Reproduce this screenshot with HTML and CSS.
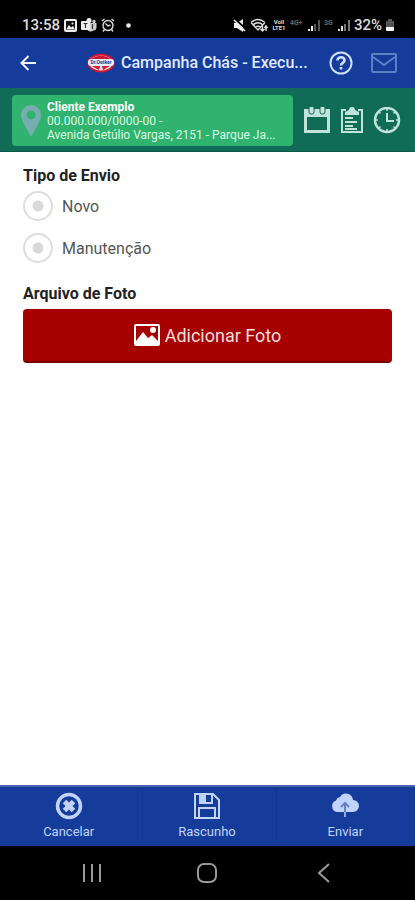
FILE: index.html
```html
<!DOCTYPE html>
<html lang="pt-BR">
<head>
<meta charset="utf-8">
<meta name="viewport" content="width=device-width, initial-scale=1">
<title>Campanha Chás</title>
<link rel="stylesheet" href="styles.css">
</head>
<body>
<div class="status">
  <div class="status-group status-left">
    <span class="status-text">13:58</span>
    <svg width="13" height="13" viewBox="0 0 13 13"><rect width="13" height="13" rx="2" fill="#eee"/><rect x="2" y="2" width="9" height="9" fill="#111"/><path d="M2 10.500 5 6l2 2.500L9 7l2 3.500z" fill="#eee"/><circle cx="8.500" cy="4.500" r="1" fill="#eee"/></svg>
    <svg width="16" height="14" viewBox="0 0 16 14"><circle cx="8" cy="2.500" r="2.500" fill="#eee"/><circle cx="13" cy="3.500" r="1.700" fill="#ccc"/><path d="M6 5h9.500v5a3 3 0 0 1-3 2.500A4 4 0 0 1 6 11z" fill="#ccc"/><rect y="3" width="9" height="9" rx="1" fill="#eee"/><path d="M2.500 5.500h4M4.500 5.500V10M11.500 6v5" stroke="#333" stroke-width="1.200"/></svg>
    <svg width="14" height="14" viewBox="0 0 14 14" fill="none" stroke="#ddd" stroke-width="1.400"><circle cx="7" cy="7.500" r="5"/><path d="M1 3 3.500 1M13 3 10.500 1M3.500 11.500 2 13.500M10.500 11.500 12 13.500M4.500 5.500 7 8l2.500-1"/></svg>
    <svg class="dot" width="5" height="5" viewBox="0 0 5 5"><circle cx="2.500" cy="2.500" r="2.300" fill="#eee"/></svg>
  </div>
  <div class="status-group status-right">
    <svg width="14" height="13" viewBox="0 0 14 13"><path d="M1 4h3l6-4v13L4 9H1z" fill="#eee"/><path d="m2 0 12 11" stroke="#000" stroke-width="2"/><path d="m1 1 11 11" stroke="#eee" stroke-width="1.600"/></svg>
    <svg width="18" height="14" viewBox="0 0 18 14" fill="none" stroke="#ddd" stroke-width="1.400"><path d="M1 4.500q7-6 14 0M3 7q5-4.500 10 0M5.500 9.500q2.500-2.500 5 0M1 4.500l7 7.500 7-7.500"/><path d="M12.500 8v5m-2-2 2 2 2-2M16 13V8m-1.500 2L16 8l1.500 2"/></svg>
    <svg width="16" height="14" viewBox="0 0 16 14"><text class="volte" x="8" y="6" text-anchor="middle">VoII</text><text class="volte" x="8" y="12" text-anchor="middle">LTE1</text></svg>
    <svg class="dim" width="14" height="9" viewBox="0 0 14 9"><text class="network" x="0" y="7">4G+</text></svg>
    <svg width="14" height="12" viewBox="0 0 14 12"><path d="M1 10h2v2H1zM4 7h2v5H4z" fill="#eee"/><path d="M7 5h2v7H7zM11 1h2v11h-2z" fill="#555"/></svg>
    <svg class="dim" width="10" height="9" viewBox="0 0 10 9"><text class="network" x="0" y="7">3G</text></svg>
    <svg width="14" height="12" viewBox="0 0 14 12"><path d="M1 10h2v2H1zM4 7h2v5H4z" fill="#ddd"/><path d="M7 5h2v7H7zM11 1h2v11h-2z" fill="#777"/></svg>
    <span class="status-text">32%</span>
    <svg width="10" height="14" viewBox="0 0 10 14"><path d="M3 1h4v2h2v7H1V3h2z" fill="#555"/><path d="M1 9h8v3q0 1-1 1H2q-1 0-1-1z" fill="#f4f4f4"/></svg>
  </div>
</div>
<header class="header">
  <button class="icon-button" aria-label="Voltar"><svg width="16" height="16" viewBox="0 0 16 16" fill="none" stroke="#eef3ff" stroke-width="2"><path d="M16 8H1.500M8.500 1 1.500 8l7 7"/></svg></button>
  <div class="brand">
    <svg width="28" height="20" viewBox="0 0 28 20"><ellipse cx="14" cy="10" rx="13.500" ry="9.500" fill="#cf1835"/><ellipse cx="14" cy="10" rx="11.500" ry="7.500" fill="#f7dce2"/><path d="M4 6Q14-1 24 6zM5 13l7 4 1-4zM23 13l-7 4-1-4z" fill="#cf1835"/><rect x="1" y="6" width="26" height="7" rx="3" fill="#e9edfa"/><text class="logo-text" x="14" y="11" text-anchor="middle">Dr.Oetker</text></svg>
    <h1>Campanha Chás - Execu...</h1>
  </div>
  <button class="icon-button help" aria-label="Ajuda"><svg width="24" height="24" viewBox="0 0 24 24" fill="none" stroke="#cfe0fb" stroke-width="2"><circle cx="12" cy="12" r="10.500"/><path d="M8.500 9.500c0-4.500 7-4 7 0 0 2.500-3.500 2.300-3.500 5" stroke-width="2.600"/><path d="M12 16v2.500" stroke-width="2.600"/></svg></button>
  <button class="icon-button" aria-label="Mensagens"><svg width="26" height="20" viewBox="0 0 26 20" fill="none" stroke="#5c7fc5" stroke-width="2"><rect x="1" y="1" width="24" height="18" rx="1"/><path d="m2 4 11 8 11-8"/></svg></button>
</header>
<section class="client-bar">
  <div class="client">
    <svg width="20" height="32" viewBox="0 0 20 32"><path fill-rule="evenodd" d="M10 0C4.500 0 0 4.500 0 10c0 6 5 12 10 22 5-10 10-16 10-22C20 4.500 15.500 0 10 0zm0 5.500a4.500 4.500 0 1 1 0 9 4.500 4.500 0 0 1 0-9z" fill="#79acae"/></svg>
    <div class="client-info"><strong>Cliente Exemplo</strong><span>00.000.000/0000-00 -</span><span>Avenida Getúlio Vargas, 2151 - Parque Ja...</span></div>
  </div>
  <button class="icon-button" aria-label="Agenda"><svg width="28" height="28" viewBox="0 0 28 28"><path fill-rule="evenodd" d="M1 2h26v24H1zm3 8v13h20V10z" fill="#c0e3db"/><g fill="#c0e3db" stroke="#106b57"><rect x="6" y="-1" width="5" height="8" rx="2"/><rect x="17" y="-1" width="5" height="8" rx="2"/></g></svg></button>
  <button class="icon-button" aria-label="Tarefas"><svg width="22" height="28" viewBox="0 0 22 28"><path d="M5 3H1v22h20V3h-4" fill="none" stroke="#c0e3db" stroke-width="2"/><path d="M4 8V5l4-2q0-3 3-3t3 3l4 2v3zM4 10h8v2H4zM4 14h12v2H4zM4 18h8v2H4zM4 21h12v2H4z" fill="#c0e3db"/></svg></button>
  <button class="icon-button" aria-label="Histórico"><svg width="28" height="28" viewBox="0 0 28 28" fill="none" stroke="#c0e3db"><circle cx="14" cy="13" r="12" stroke-width="2.500"/><path d="M14 6v8h7" stroke-width="2"/><path d="M14 1v3M14 22v3M2 13h3M23 13h3M5.500 4.500l2 2M20.500 19.500l2 2M5.500 21.500l2-2M20.500 6.500l2-2" stroke-width="1.500"/></svg></button>
</section>
<main class="form">
  <fieldset>
    <legend>Tipo de Envio</legend>
    <div class="options">
      <label class="option"><input type="radio" name="tipo"><span>Novo</span></label>
      <label class="option"><input type="radio" name="tipo"><span>Manutenção</span></label>
    </div>
  </fieldset>
  <h2>Arquivo de Foto</h2>
  <button class="add-photo"><svg width="26" height="22" viewBox="0 0 26 22"><rect x="1" y="1" width="24" height="20" rx="1" fill="none" stroke="#fff" stroke-width="2"/><path d="M2 20v-3l7-9 5 6 4-3 6 6v3z" fill="#fff"/><circle cx="19" cy="6" r="3" fill="#fff"/></svg><span>Adicionar Foto</span></button>
</main>
<footer class="actions">
  <button><svg width="28" height="28" viewBox="0 0 28 28"><circle cx="14" cy="14" r="11.500" fill="none" stroke="#c1d3fa" stroke-width="3.500"/><path d="m9.500 9.500 9 9m0-9-9 9" stroke="#c1d3fa" stroke-width="5"/></svg><span>Cancelar</span></button>
  <button><svg width="28" height="28" viewBox="0 0 28 28" fill="none" stroke="#c1d3fa" stroke-width="2"><path d="M2 2h18l6 6v18H2zM6 26V16h16v10M7 2v9h12V2"/><path d="M8 3h5v7H8z" fill="#c1d3fa" stroke="none"/></svg><span>Rascunho</span></button>
  <button><svg width="28" height="28" viewBox="0 0 28 28"><path d="M6 20a6 6 0 0 1-1-11.500A5 5 0 0 1 9 5a7 7 0 0 1 13 3 6 6 0 0 1 0 12z" fill="#c1d3fa"/><path d="M14 20V11m-4 4 4-4 4 4" fill="none" stroke="#6482c2" stroke-width="2"/><path d="M14 20v5" stroke="#8fa9e0" stroke-width="2"/></svg><span>Enviar</span></button>
</footer>
<nav class="system-nav">
  <button aria-label="Recentes"><svg width="20" height="20" viewBox="0 0 20 20" stroke="#999" stroke-width="2"><path d="M2 1v18M10 1v18M18 1v18"/></svg></button>
  <button aria-label="Início"><svg width="20" height="20" viewBox="0 0 20 20" fill="none" stroke="#999" stroke-width="2"><rect x="1" y="1" width="18" height="18" rx="6"/></svg></button>
  <button aria-label="Voltar ao anterior"><svg width="20" height="20" viewBox="0 0 20 20" fill="none" stroke="#999" stroke-width="2"><path d="M16 1 6 10l10 9"/></svg></button>
</nav>
</body>
</html>
```
FILE: styles.css
```css
* { box-sizing: border-box; }
body { margin: 0; min-height: 100vh; display: flex; flex-direction: column; font-family: Roboto, sans-serif; background: #fff; color: #222; }
button { font-family: inherit; background: none; border: 0; padding: 0; margin: 0; }
svg { display: block; flex: none; }
h1, h2, fieldset, legend { margin: 0; padding: 0; border: 0; }
.status { height: 38px; padding: 12px 20px 0 22px; background: #000; display: flex; justify-content: space-between; }
.status-group { display: flex; align-items: center; gap: 4px; }
.status-right { gap: 3px; }
.status-text { color: #ddd; font-size: 15px; font-weight: 500; }
.dot { margin-left: 7px; }
.volte { font-size: 6px; font-weight: 700; fill: #ddd; }
.network { font-size: 7px; font-weight: 700; fill: #666; }
.dim { margin-bottom: 6px; }
.header { height: 50px; padding: 0 18px 0 20px; display: flex; align-items: center; background: #163c9b; }
.icon-button { flex: none; display: flex; align-items: center; }
.brand { flex: 1; min-width: 0; display: flex; align-items: center; gap: 6px; padding-left: 51px; }
h1 { color: #e0eaff; font-size: 16px; line-height: 22px; font-weight: 500; white-space: nowrap; }
.help { margin-right: 18px; }
.logo-text { font-size: 5px; font-weight: 700; fill: #243a8d; }
.client-bar { height: 64px; padding: 2px 14px 0 12px; display: flex; align-items: center; gap: 10px; background: #106b57; border-bottom: 1px solid #075844; }
.client { flex: 1; min-width: 0; height: 51px; border-radius: 4px; background: #2fb36f; padding: 0 9px; display: flex; align-items: center; gap: 6px; }
.client-info { min-width: 0; display: flex; flex-direction: column; font-size: 12px; line-height: 14px; color: #d9fbe4; white-space: nowrap; }
.client-info strong { color: #fff; }
.form { flex: 1; padding: 13px 23px; }
legend, h2 { font-size: 16px; line-height: 22px; font-weight: 700; color: #222; }
.options { display: flex; flex-direction: column; gap: 12px; padding-top: 4px; }
.option { display: flex; align-items: center; gap: 9px; font-size: 16px; color: #555; }
.option input { appearance: none; width: 30px; height: 30px; margin: 0; border: 2px solid #ddd; border-radius: 50%; background: radial-gradient(circle, #d9d9d9 5px, #fff 6px); }
.option input:checked { border-color: #163c9b; }
h2 { margin-top: 20px; }
.add-photo { width: 100%; height: 54px; margin-top: 4px; border-radius: 4px; background: #a60000; border-bottom: 2px solid #790000; color: #f7dddd; font-size: 18px; display: flex; align-items: center; justify-content: center; gap: 5px; }
.actions { height: 61px; display: grid; grid-template-columns: repeat(3, 1fr); background: #163c9b; border-top: 2px solid #4564ac; }
.actions button { display: flex; flex-direction: column; align-items: center; justify-content: center; gap: 3px; border-right: 1px solid #12368e; color: #c1d3fa; font-size: 13px; line-height: 18px; }
.system-nav { height: 54px; padding: 0 34px; background: #000; display: grid; grid-template-columns: repeat(3, 1fr); }
.system-nav button { display: flex; align-items: center; justify-content: center; }
```
